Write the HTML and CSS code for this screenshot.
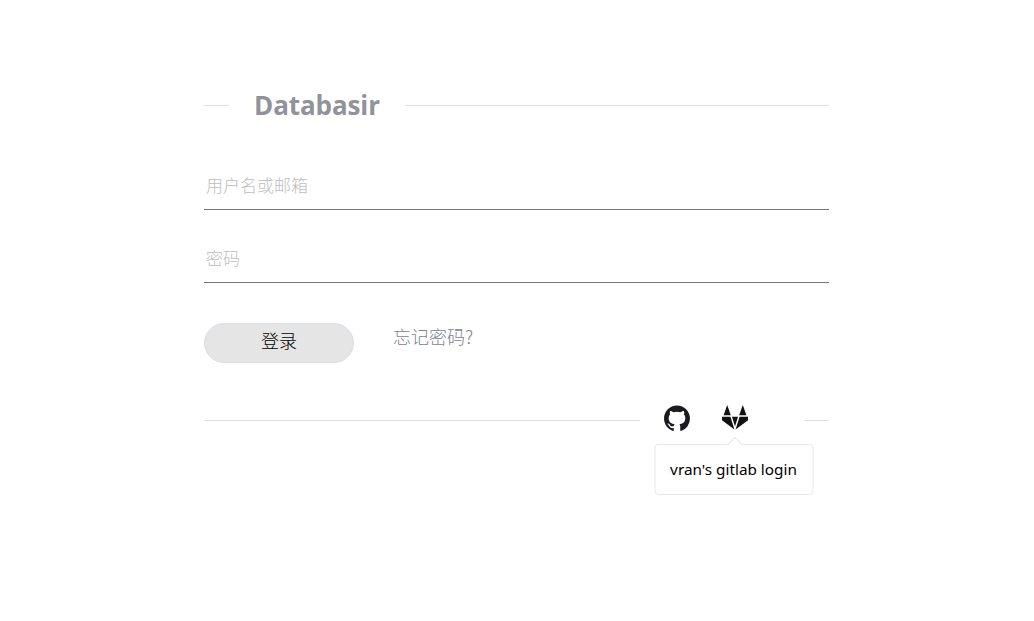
FILE: index.html
```html
<!DOCTYPE html>
<html lang="zh">
<head>
<meta charset="utf-8">
<title>Databasir</title>
<link rel="stylesheet" href="styles.css">
</head>
<body>
<main class="login">
  <div class="divider title-divider">
    <span class="line short"></span>
    <h1 class="brand">Databasir</h1>
    <span class="line grow"></span>
  </div>
  <form class="form">
    <div class="field"><input class="input" type="text" placeholder="用户名或邮箱"></div>
    <div class="field"><input class="input" type="password" placeholder="密码"></div>
    <div class="actions">
      <button class="btn" type="button">登录</button>
      <a class="forgot">忘记密码?</a>
    </div>
  </form>
  <div class="divider oauth-divider">
    <span class="line grow"></span>
    <div class="oauth">
      <svg class="icon github" viewBox="0 0 24 24"><path fill="#1b1b1f" d="M12 .5C5.37.5 0 5.87 0 12.5c0 5.3 3.44 9.8 8.2 11.39.6.11.82-.26.82-.58v-2.03c-3.34.73-4.04-1.61-4.04-1.61-.55-1.39-1.33-1.76-1.33-1.76-1.09-.74.08-.73.08-.73 1.2.09 1.84 1.24 1.84 1.24 1.07 1.83 2.81 1.3 3.49 1 .11-.78.42-1.31.76-1.61-2.67-.3-5.47-1.33-5.47-5.93 0-1.31.47-2.38 1.24-3.22-.13-.3-.54-1.52.12-3.18 0 0 1-.32 3.3 1.23a11.5 11.5 0 0 1 6 0c2.3-1.55 3.3-1.23 3.3-1.23.66 1.66.25 2.88.12 3.18.77.84 1.24 1.91 1.24 3.22 0 4.61-2.81 5.63-5.48 5.92.43.37.81 1.1.81 2.22v3.29c0 .32.22.69.83.58A12 12 0 0 0 24 12.5C24 5.87 18.63.5 12 .5z"/></svg>
      <span class="gitlab-wrap">
        <svg class="icon gitlab" viewBox="0 0 26 26">
          <polygon points="5.2,0 8.8,10.2 1.6,10.2" fill="#111"/>
          <polygon points="20.8,0 24.4,10.2 17.2,10.2" fill="#111"/>
          <polygon points="0,11.8 8.4,11.8 12.4,24.6 0,15.2" fill="#111"/>
          <polygon points="26,11.8 17.6,11.8 13.6,24.6 26,15.2" fill="#111"/>
          <polygon points="10,11.8 16,11.8 13,21.5" fill="#111"/>
        </svg>
        <div class="popover">vran's gitlab login</div>
      </span>
    </div>
    <span class="line end"></span>
  </div>
</main>
</body>
</html>
```
FILE: styles.css
```css
html, body {
  margin: 0;
  padding: 0;
  background: #fff;
}
body {
  font-family: "Open Sans", "Noto Sans CJK SC", sans-serif;
  height: 621px;
  overflow: hidden;
}
.login {
  width: 625px;
  margin-left: 204px;
  padding-top: 86px;
}
.divider {
  display: flex;
  align-items: center;
}
.line {
  display: block;
  height: 1px;
  background: #dcdfe6;
}
.short, .end { width: 25px; flex: none; }
.grow { flex: 1; }
.title-divider { height: 38px; }
.brand {
  margin: 0;
  padding: 0 25px;
  font-size: 26px;
  font-weight: 700;
  letter-spacing: -0.1px;
  line-height: 38px;
  color: #909399;
}
.form { margin-top: 42px; }
.field {
  height: 43px;
  border-bottom: 1px solid #73767a;
  margin-bottom: 29px;
}
.input {
  display: block;
  box-sizing: border-box;
  width: 100%;
  height: 43px;
  padding: 0 2px 6px;
  border: 0;
  outline: 0;
  background: transparent;
  font: 300 17px "Noto Sans CJK SC", sans-serif;
  color: #606266;
}
.input::placeholder { color: #bdbdbd; opacity: 1; }
.actions {
  display: flex;
  align-items: flex-start;
  gap: 40px;
  margin-top: 40px;
}
.btn {
  box-sizing: border-box;
  width: 150px;
  height: 40px;
  border: 1px solid #dcdfe6;
  border-radius: 20px;
  background: #e5e5e6;
  color: #000;
  font: 300 18px "Noto Sans CJK SC", sans-serif;
  padding: 0 0 6px;
}
.forgot {
  font: 300 18px/26px "Noto Sans CJK SC", sans-serif;
  color: #80838a;
  margin-left: -1px;
}
.oauth-divider { margin-top: 32px; height: 50px; }
.oauth {
  display: flex;
  align-items: center;
  gap: 32.5px;
  width: 164px;
  box-sizing: border-box;
  padding: 0 0 5px 23.5px;
}
.icon { display: block; width: 26px; height: 26px; }
.gitlab-wrap { position: relative; display: block; }
.popover {
  position: absolute;
  top: 39px;
  left: 50%;
  transform: translateX(-50%);
  box-sizing: border-box;
  width: 159px;
  height: 51px;
  margin-left: -1.5px;
  border: 1px solid #e4e7ed;
  border-radius: 4px;
  background: #fff;
  font-family: "Noto Sans", sans-serif;
  font-size: 15.3px;
  line-height: 49px;
  text-align: center;
  color: #000;
  white-space: nowrap;
}
.popover::before {
  content: "";
  position: absolute;
  top: -6px;
  left: 50%;
  width: 10px;
  height: 10px;
  margin-left: -4px;
  background: #fff;
  border-top: 1px solid #e4e7ed;
  border-left: 1px solid #e4e7ed;
  transform: rotate(45deg);
}
```
